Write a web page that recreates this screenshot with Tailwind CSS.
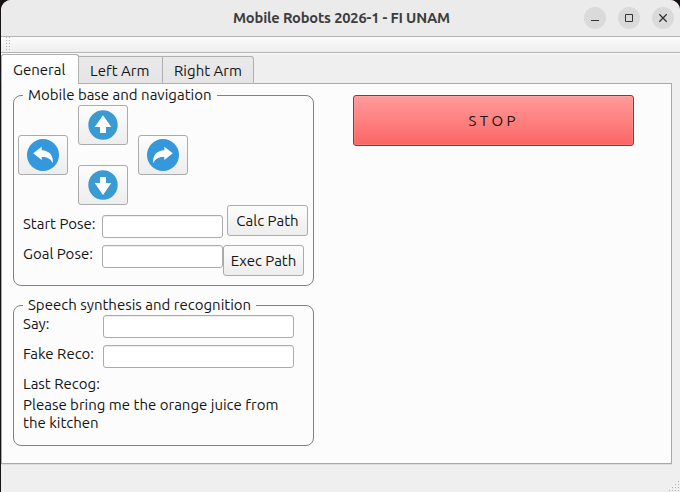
<!DOCTYPE html>
<html lang="en">
<head>
<meta charset="utf-8">
<title>Mobile Robots 2026-1 - FI UNAM</title>
<script src="https://cdn.jsdelivr.net/npm/@tailwindcss/browser@4"></script>
</head>
<body class="h-[492px] w-[680px] overflow-hidden bg-[#171216] font-['Ubuntu','Noto_Sans',sans-serif] text-[15px] leading-[18px] text-[#141414]">
<div class="ml-px flex h-[492px] w-[679px] flex-col overflow-hidden rounded-t-[10px] bg-[#efefef]">

  <header class="flex h-[36px] shrink-0 items-center bg-[#ebebeb] pr-[6px]">
    <h1 class="w-[584px] pl-[232px] text-[14.67px] font-bold whitespace-nowrap text-[#3d3d3d]"><span class="tracking-[-0.17px]">Mobile Robots 2026-1 - FI UNAM</span></h1>
    <div class="flex gap-[12px]">
      <button class="size-[22px] rounded-full bg-[#dadada]"><svg viewBox="0 0 22 22" class="size-[22px]"><path d="M7 13.5h8" stroke="#333" fill="none"/></svg></button>
      <button class="size-[22px] rounded-full bg-[#dadada]"><svg viewBox="0 0 22 22" class="size-[22px]"><path d="M7.5 7.5h7v7h-7z" stroke="#333" fill="none"/></svg></button>
      <button class="size-[22px] rounded-full bg-[#dadada]"><svg viewBox="0 0 22 22" class="size-[22px]"><path d="M7.3 7.3l7.4 7.4M14.7 7.3l-7.4 7.4" stroke="#333" stroke-width="1.3" fill="none"/></svg></button>
    </div>
  </header>

  <div class="flex h-[17px] shrink-0 border-y border-[#b4b4b4] bg-linear-to-b from-[#fbfbfb] to-[#eeeeee] pl-[5px]">
    <svg viewBox="0 0 5 15" class="h-[15px] w-[5px]"><path d="M.5 0v15M3.5 0v15" stroke="#b0b0b0" stroke-dasharray="1 2" fill="none"/></svg>
  </div>

  <nav class="flex h-[31px] shrink-0 items-end border-t border-[#fafafa]">
    <div class="z-10 h-[30px] w-[78px] rounded-t-[3px] border border-b-0 border-[#b0b0b0] bg-linear-to-b from-white to-[#fcfcfc] pt-[6px] pl-[11px]">General</div>
    <div class="h-[28px] w-[84px] border-t border-r border-b border-[#b0b0b0] bg-linear-to-b from-[#e9e9e9] to-[#e5e5e5] pt-[5px] pl-[11px] whitespace-nowrap">Left Arm</div>
    <div class="h-[28px] w-[91px] rounded-tr-[3px] border-t border-r border-b border-[#b0b0b0] bg-linear-to-b from-[#e9e9e9] to-[#e5e5e5] pt-[5px] pl-[11px] whitespace-nowrap">Right Arm</div>
    <div class="w-[418px] border-b border-[#a9a9a9]"></div>
  </nav>

  <main class="flex h-[380px] w-[671px] shrink-0 border-r border-b border-l border-[#a9a9a9] bg-[#fcfcfc] pt-[2px] pl-[11px] shadow-[0_1px_0_#dedede]">
    <div class="w-[301px] shrink-0">
      <fieldset class="h-[200px] w-[301px] rounded-[8px] border border-[#808080]">
        <legend class="ml-[9px] h-[19px] px-[5px] leading-[17px] whitespace-nowrap">Mobile base and navigation</legend>
        <div class="ml-[4px] grid h-[100px] grid-cols-[50px_50px_50px] grid-rows-[30px_30px_30px] gap-x-[10px]">
          <button aria-label="Forward" class="col-start-2 row-start-1 flex h-[40px] items-center justify-center rounded-[3px] border border-[#ababab] bg-linear-to-b from-[#fdfdfd] to-[#ededed]">
            <svg viewBox="0 0 32 32" class="size-[32px]"><circle cx="16" cy="16" r="14.7" fill="#3a9bd3"/><path d="M16 6.3L24.3 18H19v6h-6v-6H7.7z" fill="#fff"/></svg>
          </button>
          <button aria-label="Turn left" class="col-start-1 row-start-2 flex h-[40px] items-center justify-center rounded-[3px] border border-[#ababab] bg-linear-to-b from-[#fdfdfd] to-[#ededed]">
            <svg viewBox="0 0 32 32" class="size-[32px]"><circle cx="16" cy="16" r="16" fill="#3598dc"/><path d="M6.2 14.3L14.7 7.8v3.4c7.8.4 12 5.5 11 13.1-1.8-4.6-5.7-6.3-11-6.2v3z" fill="#fff"/></svg>
          </button>
          <button aria-label="Turn right" class="col-start-3 row-start-2 flex h-[40px] items-center justify-center rounded-[3px] border border-[#ababab] bg-linear-to-b from-[#fdfdfd] to-[#ededed]">
            <svg viewBox="0 0 32 32" class="size-[32px]"><circle cx="16" cy="16" r="16" fill="#3598dc"/><path d="M25.8 14.3L17.3 7.8v3.4c-7.8.4-12 5.5-11 13.1 1.8-4.6 5.7-6.3 11-6.2v3z" fill="#fff"/></svg>
          </button>
          <button aria-label="Backward" class="col-start-2 row-start-3 flex h-[40px] items-center justify-center rounded-[3px] border border-[#ababab] bg-linear-to-b from-[#fdfdfd] to-[#ededed]">
            <svg viewBox="0 0 32 32" class="size-[32px]"><circle cx="16" cy="16" r="14.7" fill="#3a9bd3"/><path d="M16 26L24.3 14H19V8h-6v6H7.7z" fill="#fff"/></svg>
          </button>
        </div>
        <div class="flex">
          <div class="flex w-[209px] shrink-0 flex-col gap-[7px] pt-[10px] pl-[9px]">
            <label class="flex h-[23px] whitespace-nowrap"><span class="w-[79px] shrink-0">Start Pose:</span><input class="h-[23px] w-[121px] rounded-[3px] border border-[#ababab] bg-white shadow-[inset_0_1px_0_#eeeeee]"></label>
            <label class="flex h-[23px] whitespace-nowrap"><span class="w-[79px] shrink-0">Goal Pose:</span><input class="h-[23px] w-[121px] rounded-[3px] border border-[#ababab] bg-white shadow-[inset_0_1px_0_#eeeeee]"></label>
          </div>
          <div class="flex flex-col gap-[9px]">
            <button class="ml-[4px] h-[31px] w-[81px] rounded-[3px] border border-[#ababab] bg-linear-to-b from-[#fdfdfd] to-[#ededed] whitespace-nowrap">Calc Path</button>
            <button class="h-[31px] w-[81px] rounded-[3px] border border-[#ababab] bg-linear-to-b from-[#fdfdfd] to-[#ededed] whitespace-nowrap">Exec Path</button>
          </div>
        </div>
      </fieldset>

      <fieldset class="mt-[10px] h-[150px] w-[301px] rounded-[8px] border border-[#808080]">
        <legend class="ml-[9px] h-[19px] px-[5px] leading-[17px] whitespace-nowrap">Speech synthesis and recognition</legend>
        <div class="flex flex-col gap-[7px] pl-[9px]">
          <label class="flex h-[23px] whitespace-nowrap"><span class="w-[80px] shrink-0">Say:</span><input class="h-[23px] w-[191px] rounded-[3px] border border-[#ababab] bg-white shadow-[inset_0_1px_0_#eeeeee]"></label>
          <label class="flex h-[23px] whitespace-nowrap"><span class="w-[80px] shrink-0">Fake Reco:</span><input class="h-[23px] w-[191px] rounded-[3px] border border-[#ababab] bg-white shadow-[inset_0_1px_0_#eeeeee]"></label>
        </div>
        <p class="mt-[7px] pl-[9px]">Last Recog:</p>
        <p class="mt-[3px] pl-[9px] whitespace-nowrap">Please bring me the orange juice from<br>the kitchen</p>
      </fieldset>
    </div>
    <button class="mt-[9px] ml-[39px] h-[51px] w-[281px] rounded-[3px] border border-[#a82a2e] bg-linear-to-b from-[#ff9a9a] to-[#fa6565] pr-[3px] whitespace-pre shadow-[inset_0_0_0_1px_rgba(255,255,255,0.12)]">S T O P</button>
  </main>

  <footer class="flex flex-1 items-end justify-end">
    <svg viewBox="0 0 12 12" class="size-[12px]" fill="#b5b5b5"><path d="M10 1h1v1h-1zM7 4h1v1H7zM10 4h1v1h-1zM4 7h1v1H4zM7 7h1v1H7zM10 7h1v1h-1zM1 10h1v1H1zM4 10h1v1H4zM7 10h1v1H7zM10 10h1v1h-1z"/></svg>
  </footer>
</div>
</body>
</html>
